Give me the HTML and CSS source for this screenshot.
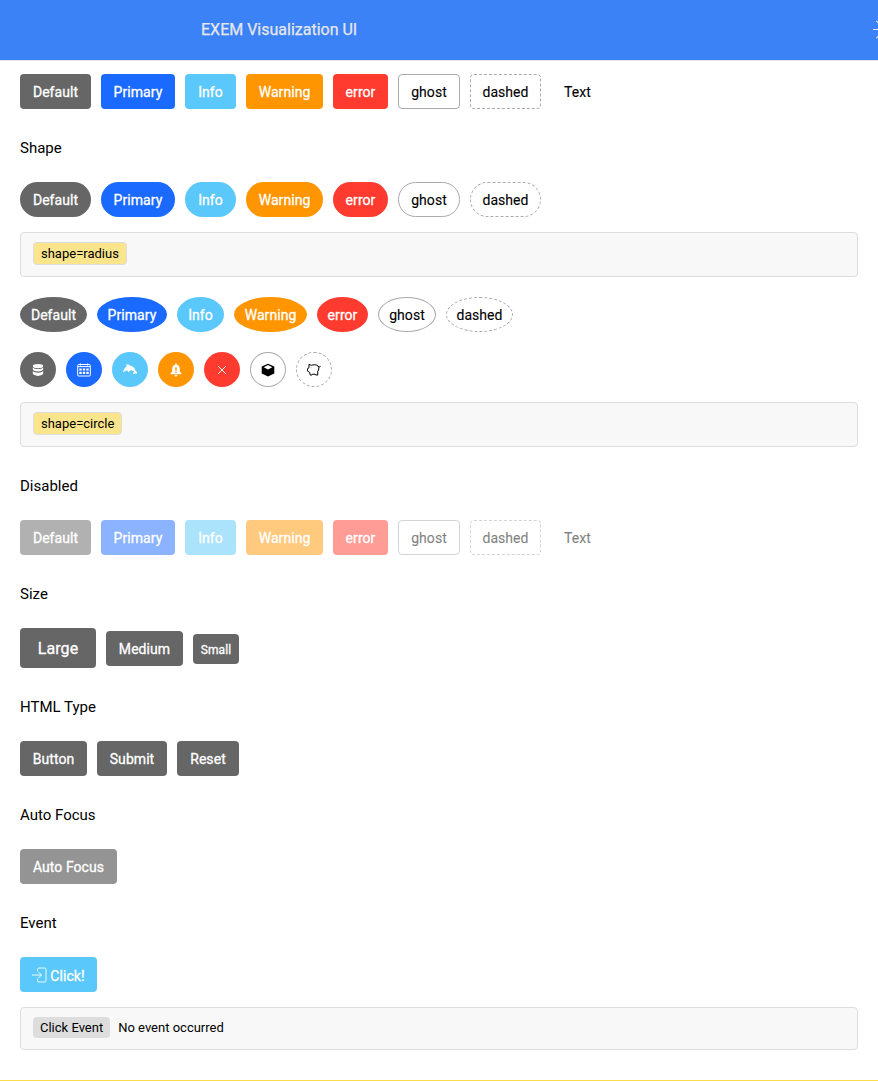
FILE: index.html
```html
<!DOCTYPE html>
<html lang="en">
<head>
<meta charset="utf-8">
<title>EXEM Visualization UI</title>
<link rel="stylesheet" href="styles.css">
</head>
<body>
<header class="header">
  <span class="brand">EXEM Visualization UI</span>
  <svg class="header-icon" viewBox="0 0 24 24" width="24" height="24"><circle cx="12" cy="12.500" r="5"/><path d="M12 .5v4M12 20.500v3.500M0 12.500h5M19 12.500h5M3.300 3.800l2.500 2.500M18 18.500l2.500 2.500M3.300 21.200l2.500-2.500M18 6.500l2.500-2.500"/></svg>
</header>
<main class="content">
  <div class="row">
    <button class="btn default">Default</button><button class="btn primary">Primary</button><button class="btn info">Info</button><button class="btn warning">Warning</button><button class="btn error">error</button><button class="btn ghost">ghost</button><button class="btn dashed">dashed</button><button class="btn text">Text</button>
  </div>
  <h2 class="heading">Shape</h2>
  <div class="row radius">
    <button class="btn default">Default</button><button class="btn primary">Primary</button><button class="btn info">Info</button><button class="btn warning">Warning</button><button class="btn error">error</button><button class="btn ghost">ghost</button><button class="btn dashed">dashed</button>
  </div>
  <div class="note"><span class="tag">shape=radius</span></div>
  <div class="row circle">
    <button class="btn default">Default</button><button class="btn primary">Primary</button><button class="btn info">Info</button><button class="btn warning">Warning</button><button class="btn error">error</button><button class="btn ghost">ghost</button><button class="btn dashed">dashed</button>
  </div>
  <div class="row icons">
    <button class="btn default" aria-label="Database"><svg class="icon solid" viewBox="0 0 14 14"><ellipse cx="7" cy="3.100" rx="5.200" ry="2.200"/><path d="M1.800 4.400c1 1.300 3 1.700 5.200 1.700s4.200-.4 5.200-1.700v1.900c0 1.200-2.300 2.200-5.200 2.200s-5.200-1-5.200-2.200z"/><path d="M1.800 8.100c1 1.300 3 1.700 5.200 1.700s4.200-.4 5.200-1.700v2.500c0 1.200-2.300 2.300-5.200 2.300s-5.200-1.100-5.200-2.300z"/></svg></button>
    <button class="btn primary" aria-label="Calendar"><svg class="icon" viewBox="0 0 14 14"><rect x=".7" y="1.500" width="12.600" height="11.500" rx=".8"/><path d="M1 3.600h12M3.500.5v2M10.500.5v2"/><path class="grid-dots" d="M2.300 5.400h2.400v2.200H2.300zM5.800 5.400h2.400v2.200H5.800zM9.300 5.400h2.400v2.200H9.300zM2.300 8.700h2.400v2.400H2.300zM5.800 8.700h2.400v2.400H5.800zM9.300 8.700h2.400v2.400H9.300z"/></svg></button>
    <button class="btn info" aria-label="Dolphin"><svg class="icon solid" viewBox="0 0 14 14"><path d="M0 9.500C.4 7 1.700 4.700 3.700 3.600L3 1.500C5 1.300 6.600 1.700 7.600 2.700c2.600.5 4.500 2.500 4.900 5l1.700 1.500v1.500l-2-.3-1.900.9-.5-.8 1.300-1.700c-.8-1.100-2-1.600-3.600-1.600L5.500 9.200 4.300 7.500 2.600 7.700 0 9.500z"/></svg></button>
    <button class="btn warning" aria-label="Alert"><svg class="icon solid" viewBox="0 0 14 14"><path fill-rule="evenodd" d="M6.200.5h1.600v1.200c1.900.4 3 1.800 3 3.700v3.200l1.600 1.700v.9H1.600v-.9l1.600-1.700V5.400c0-1.900 1.100-3.300 3-3.700zM6.300 4.200v3.600h1.400V4.200zM6.300 8.700v1.200h1.400V8.700zM5.600 11.900h2.800c0 1-.6 1.600-1.400 1.600s-1.400-.6-1.400-1.600z"/></svg></button>
    <button class="btn error" aria-label="Close"><svg class="icon" viewBox="0 0 14 14"><path d="M3 3l8 8M11 3l-8 8"/></svg></button>
    <button class="btn ghost" aria-label="Box"><svg class="icon solid" viewBox="0 0 14 14"><path fill-rule="evenodd" d="M7 .7l6.300 2.900v6.900L7 13.600.7 10.500V3.600zM7 2.100L2.700 4.200 7 6.400l4.300-2.200z"/></svg></button>
    <button class="btn dashed" aria-label="Piggy bank"><svg class="icon" viewBox="0 0 14 14"><path d="M2 1.300l2.300 1.100C6.500 1.400 9.500 1.500 11 3l.8 1.500-.2 2.500-1 1.700.2 3.300H8.600l-.4-.8H5.500l-.5.8H3.200L2.600 9.300.4 8V5.700l1.500-.8zM11.300 3.700l1.500.2.800-1M3.900 4.900h.3"/></svg></button>
  </div>
  <div class="note"><span class="tag">shape=circle</span></div>
  <h2 class="heading">Disabled</h2>
  <div class="row disabled">
    <button class="btn default">Default</button><button class="btn primary">Primary</button><button class="btn info">Info</button><button class="btn warning">Warning</button><button class="btn error">error</button><button class="btn ghost">ghost</button><button class="btn dashed">dashed</button><button class="btn text">Text</button>
  </div>
  <h2 class="heading">Size</h2>
  <div class="row">
    <button class="btn default large">Large</button><button class="btn default medium">Medium</button><button class="btn default small">Small</button>
  </div>
  <h2 class="heading">HTML Type</h2>
  <div class="row">
    <button class="btn default type-button">Button</button><button class="btn default type-submit">Submit</button><button class="btn default type-reset">Reset</button>
  </div>
  <h2 class="heading">Auto Focus</h2>
  <div class="row"><button class="btn default focused">Auto Focus</button></div>
  <h2 class="heading">Event</h2>
  <div class="row"><button class="btn info click"><svg class="login" viewBox="0 0 15 16"><path d="M5.500 4.500V2.500Q5.500 1 7 1h5.500Q14 1 14 2.500v11Q14 15 12.500 15H7q-1.500 0-1.500-1.500v-2M0 8h9.500M6.500 5l3 3-3 3"/></svg><span>Click!</span></button></div>
  <div class="note event"><span class="tag grey">Click Event</span><span>No event occurred</span></div>
</main>
<div class="bottom-line"></div>
</body>
</html>
```
FILE: styles.css
```css
* { box-sizing: border-box; }
body {
  margin: 0;
  height: 1081px;
  display: flex;
  flex-direction: column;
  overflow: hidden;
  background: #fff;
  color: #000;
  font-family: Roboto, "Liberation Sans", sans-serif;
}
.header {
  flex: none;
  height: 61px;
  padding: 0 0 2px 201px;
  display: flex;
  align-items: center;
  background: #3b82f6;
  border-bottom: 1px solid #e8e8e8;
}
.brand { flex: none; width: 672px; font-size: 16px; font-weight: 400; color: #e5e7eb; -webkit-text-stroke: .25px; white-space: nowrap; }
.header-icon { flex: none; fill: none; stroke: #e5e7eb; stroke-width: 1.200; }
.content { flex: 1; padding: 13px 20px 0; }
.row { display: flex; align-items: center; gap: 10px; }
.btn {
  flex: none;
  display: flex;
  align-items: center;
  justify-content: center;
  height: 35px;
  padding: 1px 0 0;
  border: 0;
  border-radius: 4px;
  color: #fff;
  font: 400 14px/18px Roboto, "Liberation Sans", sans-serif;
  letter-spacing: .06px;
  -webkit-text-stroke: .3px;
  white-space: nowrap;
}
.default { width: 71px; background: #666; }
.primary { width: 74px; background: #1a6aff; }
.info { width: 51px; background: #5ac8fa; }
.warning { width: 77px; background: #ff9500; }
.error { width: 55px; background: #ff3b30; }
.ghost { width: 62px; background: #fff; color: #000; border: 1px solid #aaa; }
.dashed { width: 71px; background: #fff; color: #000; border: 1px dashed #aaa; }
.text { width: 53px; background: transparent; color: #000; }
.ghost, .dashed, .text { -webkit-text-stroke: .1px; }
.radius .btn { border-radius: 18px; }
.circle .btn { border-radius: 50%; }
.circle .default, .circle .dashed { width: 67px; }
.circle .primary { width: 70px; }
.circle .info { width: 47px; }
.circle .warning { width: 73px; }
.circle .error { width: 51px; }
.circle .ghost { width: 58px; }
.icons { margin-top: 20px; }
.icons .btn { width: 36px; padding: 0; border-radius: 50%; }
.icon { width: 14px; height: 14px; fill: none; stroke: currentColor; stroke-width: 1; }
.solid, .grid-dots { fill: currentColor; stroke: none; }
.disabled .btn { opacity: .5; }
.heading { margin: 0; height: 73px; padding-top: 29px; font-size: 15px; line-height: 20px; font-weight: 400; }
.note {
  height: 45px;
  margin: 15px 0 20px;
  padding: 9px 12px;
  background: #f8f8f8;
  border: 1px solid #ddd;
  border-radius: 4px;
  display: flex;
  align-items: flex-start;
  font-size: 13px;
  line-height: 21px;
}
.note + .heading { margin-top: -20px; }
.tag { height: 23px; padding: 0 7px; background: #fae58c; border: 1px solid #ddd; border-radius: 4px; }
.large { width: 76px; height: 40px; font-size: 16px; }
.medium { width: 77px; }
.small { width: 46px; height: 30px; margin-top: 2px; font-size: 12px; }
.type-button { width: 67px; }
.type-submit { width: 70px; }
.type-reset { width: 62px; }
.focused { width: 97px; background: #949494; }
.click { width: 77px; gap: 3px; }
.click span { padding-top: 2px; }
.login { width: 15px; height: 16px; fill: none; stroke: currentColor; stroke-width: .9; }
.event { height: 43px; margin-bottom: 0; gap: 8px; }
.grey { height: 21px; background: #ddd; border: 0; }
.bottom-line { flex: none; height: 1px; background: #fadb4a; }
```
